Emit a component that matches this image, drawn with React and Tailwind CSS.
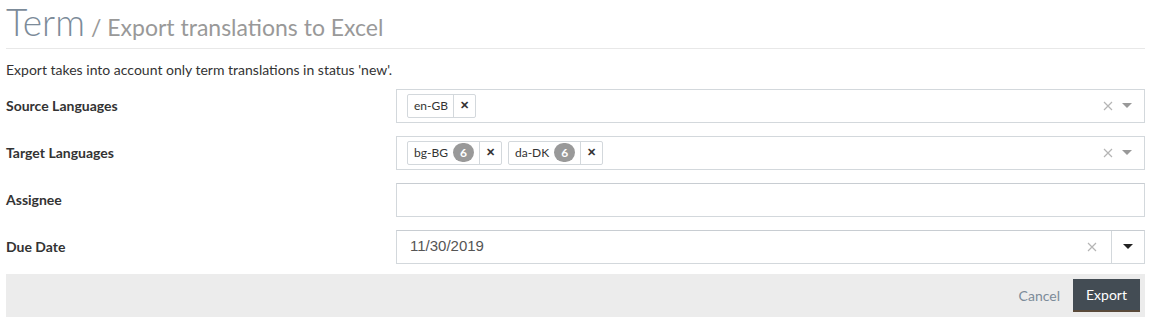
import React from "react";

function Tag({ label, badge }) {
  return (
    <div className="flex h-[24px] items-stretch rounded-[2px] border border-[#d3d8dc] bg-white text-[12px] text-[#333]">
      <div className="flex items-center gap-[5px] pl-[6px] pr-[5px]">
        <span>{label}</span>
        {badge && (
          <span className="flex h-[19px] w-[21px] items-center justify-center rounded-full bg-[#999] text-[12px] font-bold text-white">
            {badge}
          </span>
        )}
      </div>
      <div className="flex w-[22px] items-center justify-center border-l border-[#d3d8dc] text-[11px] font-bold text-[#333]">
        ✕
      </div>
    </div>
  );
}

function Caret({ color = "#999" }) {
  return (
    <svg width="10" height="5" viewBox="0 0 10 5">
      <path d="M0 0 L10 0 L5 5 Z" fill={color} />
    </svg>
  );
}

function ClearX() {
  return (
    <svg width="10" height="10" viewBox="0 0 10 10">
      <path d="M1 1 L9 9 M9 1 L1 9" stroke="#b5b5b5" strokeWidth="1.2" />
    </svg>
  );
}

function Row({ label, children }) {
  return (
    <div className="flex items-center">
      <div className="w-[390px] text-[14px] font-bold text-[#333]">{label}</div>
      <div className="flex-1">{children}</div>
    </div>
  );
}

export default function App() {
  return (
    <div className="w-[1154px] bg-white px-[6px] pr-[9px]" style={{ fontFamily: "Lato, 'Open Sans', sans-serif" }}>
      <div className="flex items-baseline border-b border-[#e8e8e8] pb-[3px] pt-[1px]">
        <span className="text-[37px] font-light leading-[42px] text-[#7c8b99]">Term</span>
        <span className="ml-[6px] text-[23px] text-[#999]">/ Export translations to Excel</span>
      </div>
      <div className="mt-[10px] text-[14px] text-[#333]">Export takes into account only term translations in status 'new'.</div>
      <div className="mt-[9px] flex flex-col gap-[13px]">
        <Row label="Source Languages">
          <div className="flex h-[34px] items-center border border-[#d3d8dc] pl-[10px] pr-[12px]">
            <Tag label="en-GB" />
            <div className="flex-1" />
            <ClearX />
            <div className="ml-[9px]"><Caret /></div>
          </div>
        </Row>
        <Row label="Target Languages">
          <div className="flex h-[34px] items-center gap-[6px] border border-[#d3d8dc] pl-[10px] pr-[12px]">
            <Tag label="bg-BG" badge="6" />
            <Tag label="da-DK" badge="6" />
            <div className="flex-1" />
            <ClearX />
            <div className="ml-[3px]"><Caret /></div>
          </div>
        </Row>
        <Row label="Assignee">
          <div className="h-[34px] border border-[#d3d8dc] border-t-[#c8cdd2]" />
        </Row>
        <Row label="Due Date">
          <div className="flex h-[34px] items-stretch border border-[#d3d8dc] border-t-[#c8cdd2]">
            <div className="flex flex-1 items-center pl-[13px] text-[15px] text-[#555]" style={{ fontFamily: "'Liberation Sans', Arial, sans-serif" }}>
              11/30/2019
            </div>
            <div className="flex items-center pr-[14px]"><ClearX /></div>
            <div className="flex w-[33px] items-center justify-center border-l border-[#d3d8dc]">
              <Caret color="#222" />
            </div>
          </div>
        </Row>
      </div>
      <div className="mt-[10px] flex h-[43px] items-center justify-end bg-[#ececec] pr-[5px]">
        <span className="mr-[13px] text-[14px] text-[#7c8b99]">Cancel</span>
        <button className="h-[33px] w-[67px] border-b-2 border-[#5a4a3a] bg-[#434c54] text-[14px] text-white">Export</button>
      </div>
    </div>
  );
}
